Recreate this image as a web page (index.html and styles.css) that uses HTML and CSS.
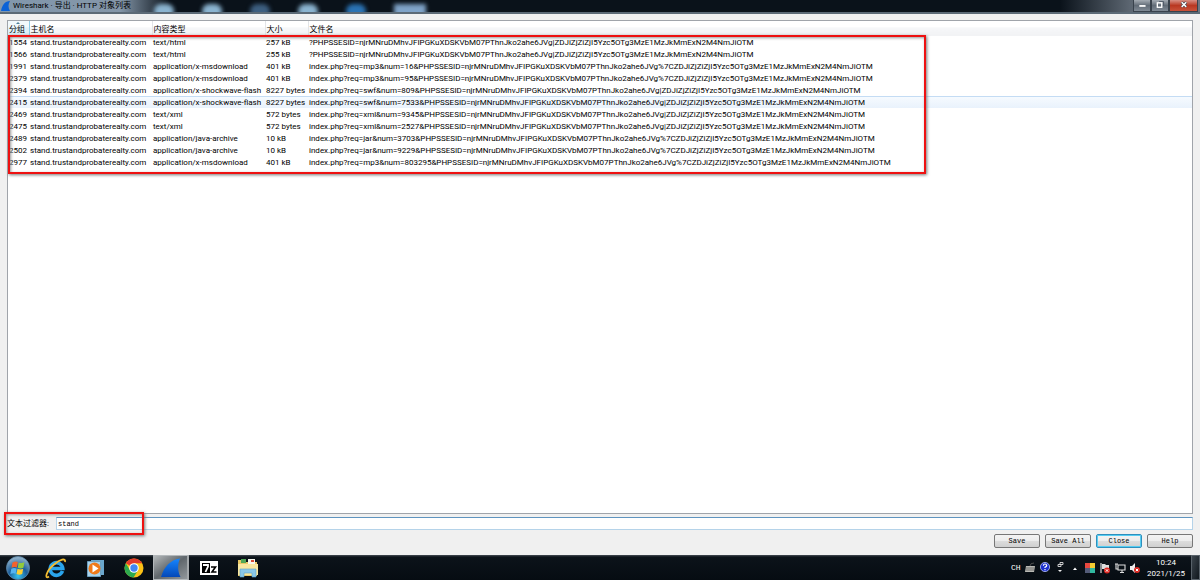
FILE: index.html
```html
<!DOCTYPE html>
<html lang="zh-CN">
  <head>
    <meta charset="UTF-8" />
    <meta name="viewport" content="width=device-width, initial-scale=1.0" />
    <title>Wireshark · 导出 · HTTP 对象列表</title>
    <link rel="stylesheet" href="styles.css">
  </head>
  <body>
    <header class="titlebar">
      <div class="glow">
        <i class="spot sky"></i><i class="spot sky"></i><i class="spot dim"></i><i class="spot sky"></i><i class="spot blue"></i><i class="spot wide"></i>
      </div>
      <svg class="title-icon" viewBox="0 0 12 12"><path d="M1 11C2 5 5 1 10 1C8 4 8 8 10 11Z" fill="#0b62d6"/></svg>
      <h1 class="title">Wireshark · 导出 · HTTP 对象列表</h1>
      <div class="window-buttons">
        <button class="win-btn" aria-label="Minimize"><svg viewBox="0 0 18 12"><path d="M6 6.500h7" stroke="#fff" stroke-width="2"/></svg></button>
        <button class="win-btn" aria-label="Restore"><svg viewBox="0 0 18 12"><path d="M8 1.500h5v5" fill="none" stroke="#4c5664"/><rect x="6" y="3" width="5" height="5" fill="none" stroke="#fff" stroke-width="1.500"/></svg></button>
        <button class="win-btn win-close" aria-label="Close window"><svg viewBox="0 0 28 12"><path d="M12 2.500l5 5m0-5l-5 5" stroke="#39404d" stroke-width="3"/><path d="M12 2.500l5 5m0-5l-5 5" stroke="#fff" stroke-width="1.600"/></svg></button>
      </div>
    </header>

    <main class="dialog">
      <div class="object-list">
        <table class="objects">
          <colgroup>
            <col class="col-packet"><col class="col-host"><col class="col-type"><col class="col-size"><col>
          </colgroup>
          <thead>
            <tr><th class="sorted">分组</th><th>主机名</th><th>内容类型</th><th>大小</th><th>文件名</th></tr>
          </thead>
          <tbody>
            <tr><td>1554</td><td>stand.trustandprobaterealty.com</td><td>text/html</td><td>257 kB</td><td>?PHPSSESID=njrMNruDMhvJFIPGKuXDSKVbM07PThnJko2ahe6JVg|ZDJiZjZiZjI5Yzc5OTg3MzE1MzJkMmExN2M4NmJiOTM</td></tr>
            <tr><td>1566</td><td>stand.trustandprobaterealty.com</td><td>text/html</td><td>255 kB</td><td>?PHPSSESID=njrMNruDMhvJFIPGKuXDSKVbM07PThnJko2ahe6JVg|ZDJiZjZiZjI5Yzc5OTg3MzE1MzJkMmExN2M4NmJiOTM</td></tr>
            <tr><td>1991</td><td>stand.trustandprobaterealty.com</td><td>application/x-msdownload</td><td>401 kB</td><td>index.php?req=mp3&amp;num=16&amp;PHPSSESID=njrMNruDMhvJFIPGKuXDSKVbM07PThnJko2ahe6JVg%7CZDJiZjZiZjI5Yzc5OTg3MzE1MzJkMmExN2M4NmJiOTM</td></tr>
            <tr><td>2379</td><td>stand.trustandprobaterealty.com</td><td>application/x-msdownload</td><td>401 kB</td><td>index.php?req=mp3&amp;num=95&amp;PHPSSESID=njrMNruDMhvJFIPGKuXDSKVbM07PThnJko2ahe6JVg%7CZDJiZjZiZjI5Yzc5OTg3MzE1MzJkMmExN2M4NmJiOTM</td></tr>
            <tr><td>2394</td><td>stand.trustandprobaterealty.com</td><td>application/x-shockwave-flash</td><td>8227 bytes</td><td>index.php?req=swf&amp;num=809&amp;PHPSSESID=njrMNruDMhvJFIPGKuXDSKVbM07PThnJko2ahe6JVg|ZDJiZjZiZjI5Yzc5OTg3MzE1MzJkMmExN2M4NmJiOTM</td></tr>
            <tr class="hovered"><td>2415</td><td>stand.trustandprobaterealty.com</td><td>application/x-shockwave-flash</td><td>8227 bytes</td><td>index.php?req=swf&amp;num=7533&amp;PHPSSESID=njrMNruDMhvJFIPGKuXDSKVbM07PThnJko2ahe6JVg|ZDJiZjZiZjI5Yzc5OTg3MzE1MzJkMmExN2M4NmJiOTM</td></tr>
            <tr><td>2469</td><td>stand.trustandprobaterealty.com</td><td>text/xml</td><td>572 bytes</td><td>index.php?req=xml&amp;num=9345&amp;PHPSSESID=njrMNruDMhvJFIPGKuXDSKVbM07PThnJko2ahe6JVg|ZDJiZjZiZjI5Yzc5OTg3MzE1MzJkMmExN2M4NmJiOTM</td></tr>
            <tr><td>2475</td><td>stand.trustandprobaterealty.com</td><td>text/xml</td><td>572 bytes</td><td>index.php?req=xml&amp;num=2527&amp;PHPSSESID=njrMNruDMhvJFIPGKuXDSKVbM07PThnJko2ahe6JVg|ZDJiZjZiZjI5Yzc5OTg3MzE1MzJkMmExN2M4NmJiOTM</td></tr>
            <tr><td>2489</td><td>stand.trustandprobaterealty.com</td><td>application/java-archive</td><td>10 kB</td><td>index.php?req=jar&amp;num=3703&amp;PHPSSESID=njrMNruDMhvJFIPGKuXDSKVbM07PThnJko2ahe6JVg%7CZDJiZjZiZjI5Yzc5OTg3MzE1MzJkMmExN2M4NmJiOTM</td></tr>
            <tr><td>2502</td><td>stand.trustandprobaterealty.com</td><td>application/java-archive</td><td>10 kB</td><td>index.php?req=jar&amp;num=9229&amp;PHPSSESID=njrMNruDMhvJFIPGKuXDSKVbM07PThnJko2ahe6JVg%7CZDJiZjZiZjI5Yzc5OTg3MzE1MzJkMmExN2M4NmJiOTM</td></tr>
            <tr><td>2977</td><td>stand.trustandprobaterealty.com</td><td>application/x-msdownload</td><td>401 kB</td><td>index.php?req=mp3&amp;num=803295&amp;PHPSSESID=njrMNruDMhvJFIPGKuXDSKVbM07PThnJko2ahe6JVg%7CZDJiZjZiZjI5Yzc5OTg3MzE1MzJkMmExN2M4NmJiOTM</td></tr>
          </tbody>
        </table>
        <div class="mark mark-rows"></div>
      </div>

      <div class="filter">
        <label for="filter">文本过滤器:</label>
        <input type="text" id="filter" value="stand" autocomplete="off" spellcheck="false">
        <div class="mark mark-filter"></div>
      </div>

      <div class="actions">
        <button class="btn">Save</button>
        <button class="btn">Save All</button>
        <button class="btn btn-default">Close</button>
        <button class="btn">Help</button>
      </div>
    </main>

    <footer class="taskbar">
      <button class="task start" aria-label="Start">
        <svg viewBox="0 0 24 24">
          <defs><radialGradient id="orb" cx=".5" cy=".85" r=".8"><stop offset="0" stop-color="#35c4ee"/><stop offset=".5" stop-color="#1c5f9c"/><stop offset="1" stop-color="#8fb0c8"/></radialGradient></defs>
          <circle cx="12" cy="12" r="11.500" fill="url(#orb)" stroke="#5a86a8" stroke-width=".8"/>
          <path d="M6.500 6.500q3-1.800 5.300-.5l-1 5.500q-2.500-1-5.300.3z" fill="#f2622c"/>
          <path d="M12.700 6.500q2.600 1.300 5.700-.2l-1 5.500q-2.800 1.300-5.700 0z" fill="#92ca3c"/>
          <path d="M5.300 12.700q2.600-1.300 5.300-.2l-1 5.200q-2.300-1-5.200.2z" fill="#55b4f0"/>
          <path d="M11.500 12.800q2.800 1.200 5.700 0l-1 5.200q-2.800 1.300-5.700 0z" fill="#fccf30"/>
        </svg>
      </button>
      <button class="task" aria-label="Internet Explorer">
        <svg viewBox="0 0 24 24">
          <path d="M18.500 15A6.300 6.300 0 1 1 18.800 12.500H7" fill="none" stroke="#2aa4ec" stroke-width="3.600"/>
          <path d="M5 20.500C0 24 2 15 10 8.500C16 3.500 22 1.500 21 6" fill="none" stroke="#f3bd32" stroke-width="1.800"/>
        </svg>
      </button>
      <button class="task" aria-label="Media Player">
        <svg viewBox="0 0 24 24">
          <path d="M8 4h13v15H8z" fill="#6aa6cc"/><path d="M4.500 5.500h13v15h-13z" fill="#a9d3ec" stroke="#6c9fbf"/>
          <circle cx="11.500" cy="12.500" r="6" fill="#ef7a1a"/><path d="M9.500 8.500l6 4-6 4z" fill="#fff"/>
        </svg>
      </button>
      <button class="task" aria-label="Chrome">
        <svg viewBox="0 0 24 24">
          <circle cx="12" cy="12" r="9.500" fill="#fbc116"/>
          <path d="M12 12L3.800 7.200A9.500 9.500 0 0 1 20.200 7.200H12z" fill="#e33b2e"/>
          <path d="M3.800 7.200A9.500 9.500 0 0 0 11.500 21.500L16 14.300 12 12 8 14.300z" fill="#2da94f"/>
          <circle cx="12" cy="12" r="4.800" fill="#fff"/><circle cx="12" cy="12" r="3.700" fill="#4285f4"/>
        </svg>
      </button>
      <button class="task task-active" aria-label="Wireshark">
        <svg viewBox="0 0 24 24">
          <defs><linearGradient id="fin" x2="0" y2="1"><stop offset="0" stop-color="#1686ff"/><stop offset="1" stop-color="#0448b8"/></linearGradient></defs>
          <path d="M2 21C5 11 11 4 21 2.500C18.500 8 18.500 15 21.500 21Z" fill="url(#fin)"/>
        </svg>
      </button>
      <button class="task" aria-label="7-Zip">
        <svg viewBox="0 0 24 24">
          <path d="M3 5h18v14H3z" fill="#fff"/><path d="M5 7h8v10H5z" fill="#000"/>
          <path d="M6 9h5v1.500L8.500 16" fill="none" stroke="#fff" stroke-width="1.800"/><path d="M14 11h4.500L15 16h4.500" fill="none" stroke="#000" stroke-width="1.600"/>
        </svg>
      </button>
      <button class="task" aria-label="Explorer">
        <svg viewBox="0 0 24 24">
          <path d="M2 4h7l1 2h11v14H2z" fill="#e9c866"/><path d="M5 3h5v4H5z" fill="#50a857"/><path d="M12 3h7v5h-7z" fill="#f7f7ee"/><path d="M15 4h3v2h-3z" fill="#d94a35"/>
          <path d="M2 8h20v11H2z" fill="#f9e7a0"/><path d="M4 21v-8h16v8h-4v-4H8v4z" fill="#8bc8e8" stroke="#5ba3cb" stroke-width=".6"/>
        </svg>
      </button>

      <div class="tray">
        <span class="lang">CH</span>
        <svg class="tray-icon" viewBox="0 0 12 12"><path d="M2 4h9l-1 6H1z" fill="#b9b9b4"/><path d="M6 4q0-3 4-3M2 6h8M2 8h8" fill="none" stroke="#5c5c5a" stroke-width=".8"/></svg>
        <svg class="tray-icon" viewBox="0 0 12 12"><circle cx="6" cy="5" r="4.600" fill="#1c2fd0" stroke="#b9c4ff" stroke-width=".8"/><path d="M4.300 3.700Q4.500 2 6 2T7.700 3.600Q7.600 4.600 6 5.200V6M6 7v1.300" fill="none" stroke="#fff" stroke-width="1.200"/></svg>
        <svg class="tray-icon" viewBox="0 0 12 12"><path d="M6 .5h3v2H6zM4 2.500h3v2H4z" fill="none" stroke="#ddd" stroke-width=".9"/><path d="M4 8h4l-2 2z" fill="#eee"/></svg>
        <svg class="tray-icon" viewBox="0 0 12 12"><path d="M4 8l2-2.500L8 8z" fill="#fff"/></svg>
        <svg class="tray-icon" viewBox="0 0 12 12"><path d="M1 1h5v5H1z" fill="#e8483f"/><path d="M6 1h5v5H6z" fill="#f5cc32"/><path d="M1 6h5v5H1z" fill="#535b78"/><path d="M6 6h5v5H6z" fill="#31b9a0"/></svg>
        <svg class="tray-icon" viewBox="0 0 12 12"><path d="M2 1v10" stroke="#fff"/><path d="M3 2h3l1 1h3v5H6L5 7H3z" fill="#ddd"/><circle cx="8" cy="8.500" r="3" fill="#dc2720"/><path d="M6.800 7.300l2.400 2.400m0-2.400L6.800 9.700" stroke="#fff"/></svg>
        <svg class="tray-icon" viewBox="0 0 12 12"><path d="M4 3h7v5H4zM6 10.500h4M8 8v2M1 2h3M2 2v5h2" fill="none" stroke="#ddd" stroke-width="1.100"/></svg>
        <svg class="tray-icon" viewBox="0 0 12 12"><path d="M1 4h2l3-3v10L3 8H1z" fill="#eee"/><circle cx="8" cy="8" r="3" fill="#dc2720"/><path d="M6.800 6.800l2.400 2.400m0-2.400L6.800 9.200" stroke="#fff"/></svg>
        <div class="clock"><time>10:24</time><time>2021/1/25</time></div>
        <button class="show-desktop" aria-label="Show desktop"></button>
      </div>
    </footer>
  </body>
</html>
```

FILE: styles.css
```css
* {
  box-sizing: border-box;
  margin: 0;
  padding: 0;
}

body {
  display: flex;
  flex-direction: column;
  min-height: 100vh;
  font-family: Roboto, "Noto Sans CJK SC", sans-serif;
  font-size: 8px;
  line-height: 12px;
  color: #000;
  background-color: #f0f0f0;
}

button {
  font: inherit;
  border: none;
}

svg {
  display: block;
}

/* title bar */
.titlebar {
  position: relative;
  display: flex;
  align-items: center;
  height: 14px;
  overflow: hidden;
  border-bottom: 2px solid #5c6a76;
  background: linear-gradient(to right, #8197ac, #8496a8 120px, #0a121a 170px, #0a121a 1060px, #5c6671 1130px, #6d7883);
}

.glow {
  position: absolute;
  left: 154px;
  top: 4px;
  display: flex;
  gap: 28px;
}

.spot {
  width: 20px;
  height: 14px;
  border-radius: 8px;
  filter: blur(2px);
}

.sky { background-color: #8bb4d0; }
.dim { background-color: #3d5f80; }
.blue { background-color: #2a73b4; }
.wide { width: 32px; border-radius: 0; background-color: #7fa3c8; }

.title-icon {
  position: relative;
  width: 12px;
  height: 12px;
}

.title {
  position: relative;
  padding-left: 1px;
  font-size: 8px;
  font-weight: normal;
  line-height: 12px;
}

.window-buttons {
  position: relative;
  display: flex;
  align-self: flex-start;
  height: 12px;
  margin-left: auto;
  padding-right: 2px;
}

.win-btn {
  width: 18px;
  border: 1px solid #39424c;
  border-top: none;
  background: linear-gradient(#a4abb3, #626c77 50%, #7f8994);
}

.win-btn svg {
  width: 100%;
  height: 11px;
}

.win-close {
  width: 29px;
  background: linear-gradient(#d89085, #b93822 50%, #c9523a);
}

/* dialog */
.dialog {
  display: flex;
  flex-direction: column;
  flex: 1;
  padding: 6px 7px;
}

.object-list {
  position: relative;
  flex: 1;
  border: 1px solid #a0a4aa;
  background-color: #fff;
}

.objects {
  width: 100%;
  table-layout: fixed;
  border-collapse: collapse;
}

.col-packet { width: 21px; }
.col-host { width: 123px; }
.col-type { width: 113px; }
.col-size { width: 43px; }

.objects th,
.objects td {
  padding-left: 1px;
  font-weight: normal;
  text-align: left;
  white-space: nowrap;
}

.objects th {
  height: 15px;
  padding-top: 2px;
  border-right: 1px solid #e2e4e7;
  background: linear-gradient(#fff 40%, #f6f7f9 45%, #f1f2f4);
}

.objects th:last-child {
  border-right: none;
}

.objects .sorted {
  position: relative;
  border-right-color: #8ccde8;
  background: linear-gradient(#f2f9fc 40%, #e1f1f9 45%, #d8ecf6);
}

.sorted::after {
  content: "";
  position: absolute;
  top: 1px;
  left: 8px;
  border: 2px solid transparent;
  border-top: none;
  border-bottom-color: #4f7f98;
}

.objects td {
  height: 12px;
  padding-top: 2px;
  line-height: 10px;
}

.hovered {
  background: linear-gradient(#f7fbff, #e9f2fc);
  box-shadow: inset 0 1px #c4dcf4;
}

/* red frames drawn over the window */
.mark {
  position: absolute;
  border: 2px solid #ee1111;
  box-shadow: 1px 1px 3px #777, inset 1px 1px 3px #999;
  pointer-events: none;
}

.mark-rows {
  top: 14px;
  left: 0;
  width: 918px;
  height: 139px;
}

.filter {
  position: relative;
  display: flex;
  align-items: center;
  gap: 8px;
  padding-top: 3px;
}

.filter label {
  width: 41px;
  white-space: nowrap;
}

.filter input {
  flex: 1;
  min-width: 0;
  height: 13px;
  padding-left: 1px;
  font-family: "Liberation Mono", monospace;
  font-size: 7px;
  border: 1px solid #b5d3e9;
  border-top-color: #5f94bf;
  background-color: #fff;
  outline: none;
}

.mark-filter {
  top: -2px;
  left: -3px;
  width: 140px;
  height: 23px;
}

.actions {
  display: flex;
  justify-content: flex-end;
  gap: 5px;
  padding-top: 4px;
}

.btn {
  width: 46px;
  height: 14px;
  font-family: "Liberation Mono", monospace;
  font-size: 7px;
  line-height: 12px;
  border: 1px solid #777;
  border-radius: 2px;
  background: linear-gradient(#f3f3f3, #ececec 50%, #dddddd 50%, #d0d0d0);
}

.btn-default {
  border-color: #2f8fbd;
  box-shadow: inset 0 0 0 1px #55cdf2;
}

.actions {
  padding-bottom: 1px;
}

/* taskbar */
.taskbar {
  display: flex;
  height: 25px;
  background: linear-gradient(#454d55, #0c131a 2px, #060c12);
}

.task {
  display: flex;
  align-items: center;
  justify-content: center;
  width: 39px;
  background: none;
}

.task svg {
  width: 24px;
  height: 24px;
}

.start {
  width: 36px;
}

.task-active {
  width: 36px;
  border: 1px solid #b3b8bb;
  border-right: 2px solid #a3a8ab;
  background: linear-gradient(to bottom right, #b4b8ba, #60676c 50%, #92989c);
}

.tray {
  display: flex;
  align-items: center;
  gap: 3px;
  margin-left: auto;
  color: #fff;
}

.lang {
  width: 10px;
  font-family: "Liberation Mono", monospace;
}

.tray-icon {
  width: 12px;
  height: 12px;
}

.clock {
  display: flex;
  flex-direction: column;
  align-items: center;
  width: 44px;
  line-height: 11px;
}

.show-desktop {
  align-self: stretch;
  width: 9px;
  border: 1px solid #59626a;
  background: linear-gradient(to bottom right, #3c454d, #10171d);
}
```
